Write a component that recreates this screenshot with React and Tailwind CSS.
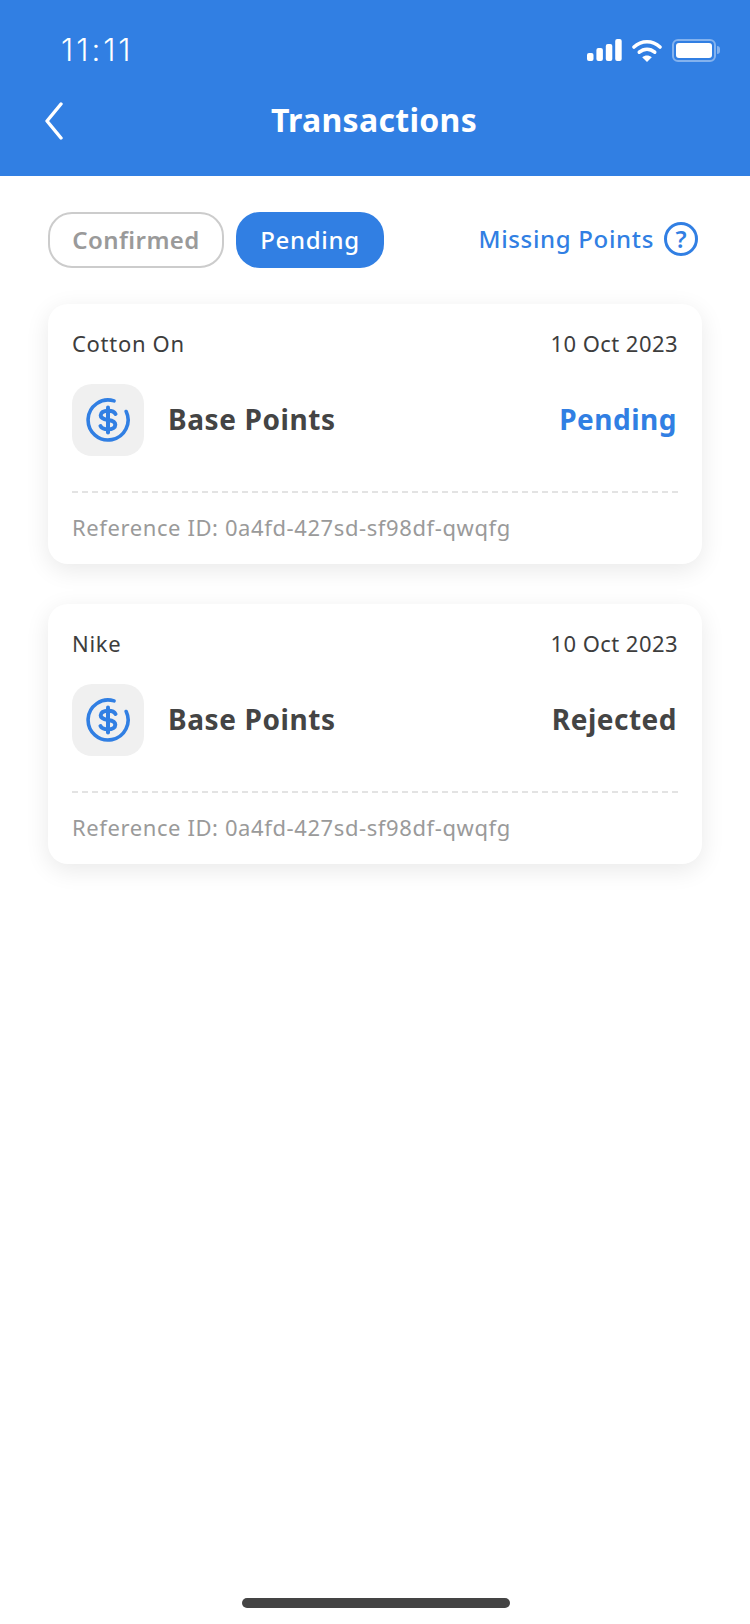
import React from 'react';

const transactions = [
    { store: 'Cotton On', status: 'Pending', statusClass: 'text-[#317fe3]' },
    { store: 'Nike', status: 'Rejected', statusClass: 'text-[#444444]' },
];

const DollarIcon = () => (
    <svg width="46" height="46" viewBox="0 0 46 46" fill="none" stroke="#317fe3" strokeWidth="3.600" strokeLinecap="round" strokeLinejoin="round">
        <path d="M29 3.900A20 20 0 1 0 41.200 14.500" />
        <path d="M30.500 17c-1-2.200-3.400-3.300-7.500-3.300-4.500 0-7.300 1.800-7.300 4.600 0 2.900 2.800 4 7.300 4.700 4.500.6 7.300 1.800 7.300 4.700 0 2.800-2.800 4.600-7.300 4.600-4.100 0-6.500-1.100-7.500-3.300" strokeWidth="4" />
        <path d="M23 10.500v25" strokeWidth="4" />
    </svg>
);

const StatusIcons = () => (
    <div className="flex items-center gap-[10px]">
        <svg width="35" height="22" viewBox="0 0 35 22" fill="white">
            <rect x="0" y="14" width="6.500" height="8" rx="2" />
            <rect x="9.400" y="9" width="6.500" height="13" rx="2" />
            <rect x="18.800" y="5" width="6.500" height="17" rx="2" />
            <rect x="28.200" y="0" width="6.500" height="22" rx="2" />
        </svg>
        <svg width="30" height="23" viewBox="0 0 30 23" fill="none" stroke="white" strokeWidth="3.600" strokeLinecap="round">
            <path d="M2 8C9.500 1 20.500 1 28 8" />
            <path d="M7.300 13.200c4.600-4 10.800-4 15.400 0" />
            <path d="M15 23l-4.800-4.800c2.800-2.200 6.800-2.200 9.600 0z" fill="white" stroke="none" />
        </svg>
        <div className="flex items-center gap-[1px]">
            <div className="w-[44px] h-[23px] rounded-[6px] border-2 border-white/40 p-[2px]">
                <div className="w-full h-full rounded-[3px] bg-white"></div>
            </div>
            <div className="w-[3px] h-[8px] rounded-r-full bg-white/40"></div>
        </div>
    </div>
);

const TransactionCard = ({ store, status, statusClass }) => (
    <div className="bg-white rounded-[20px] shadow-[0_6px_24px_rgba(0,0,0,0.09)] px-6 h-[260px] flex flex-col">
        <div className="flex justify-between items-center text-[22px] leading-[30px] text-[#3d3d3d] mt-[24px]">
            <span className="tracking-[0.7px]">{store}</span>
            <span className="tracking-[0.45px]">10 Oct 2023</span>
        </div>
        <div className="flex items-center mt-[26px] h-[72px]">
            <div className="w-[72px] h-[72px] rounded-[20px] bg-[#f0f0f0] flex items-center justify-center">
                <DollarIcon />
            </div>
            <span className="ml-6 mb-[2px] text-[28px] font-bold text-[#444444] tracking-[0.6px]">Base Points</span>
            <span className={`ml-auto mb-[2px] mr-[1px] text-[28px] font-bold tracking-[0.5px] ${statusClass}`}>{status}</span>
        </div>
        <div className="mt-[35px] border-t-2 border-dashed border-[#e3e3e3]"></div>
        <p className="mt-[19px] text-[22px] leading-[30px] text-[#9a9a9a] tracking-[0.6px]">Reference ID: 0a4fd-427sd-sf98df-qwqfg</p>
    </div>
);

const App = () => {
    return (
        <div className="w-[750px] h-[1624px] bg-white flex flex-col font-['Noto_Sans',sans-serif]">
            {/* Header */}
            <header className="h-[176px] bg-[#317fe3] text-white shrink-0">
                <div className="flex items-center justify-between h-[100px] pl-[61px] pr-[30px]">
                    <span className="text-[31px] font-light font-['Inter',sans-serif] tracking-[3px]">11:11</span>
                    <StatusIcons />
                </div>
                <div className="relative flex items-center justify-center h-[40px]">
                    <svg className="absolute left-[44px] top-[2px]" width="20" height="38" viewBox="0 0 20 38" fill="none" stroke="white" strokeWidth="3.400" strokeLinecap="round" strokeLinejoin="round">
                        <path d="M17 2L3 19l14 17" />
                    </svg>
                    <h1 className="text-[32px] font-bold leading-none tracking-[0.3px] mr-[2px]">Transactions</h1>
                </div>
            </header>

            {/* Tabs */}
            <div className="flex items-center px-12 mt-9">
                <button className="w-[176px] h-14 rounded-3xl border-2 border-[#cccccc] text-[24px] font-semibold text-[#9a9a9a] tracking-[0.45px]">Confirmed</button>
                <button className="ml-3 w-[148px] h-14 rounded-3xl bg-[#317fe3] text-[24px] font-medium text-white tracking-[0.7px]">Pending</button>
                <div className="ml-auto mr-1 flex items-center gap-[10px] mb-[3px]">
                    <span className="text-[24px] font-medium text-[#317fe3] tracking-[0.67px]">Missing Points</span>
                    <div className="w-[34px] h-[34px] rounded-full border-[3px] border-[#317fe3] flex items-center justify-center text-[24px] font-semibold leading-none text-[#317fe3]">?</div>
                </div>
            </div>

            {/* Cards */}
            <div className="flex flex-col gap-10 px-12 mt-9">
                {transactions.map((t) => (
                    <TransactionCard key={t.store} {...t} />
                ))}
            </div>

            {/* Home indicator */}
            <div className="mt-auto mb-4 ml-[242px] w-[268px] h-[10px] rounded-full bg-[#444444]"></div>
        </div>
    );
};

export default App;
